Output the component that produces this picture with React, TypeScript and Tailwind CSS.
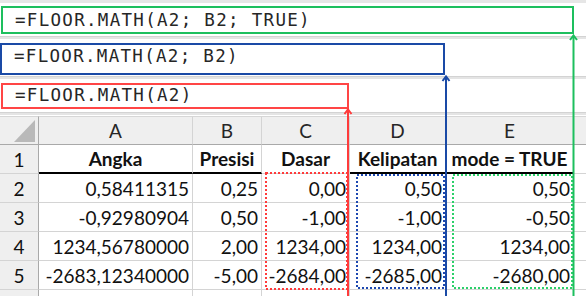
import React from 'react';

const rows = [
  ['0,58411315', '0,25', '0,00', '0,50', '0,50'],
  ['-0,92980904', '0,50', '-1,00', '-1,00', '-0,50'],
  ['1234,56780000', '2,00', '1234,00', '1234,00', '1234,00'],
  ['-2683,12340000', '-5,00', '-2684,00', '-2685,00', '-2680,00'],
];

const headers = ['Angka', 'Presisi', 'Dasar', 'Kelipatan', 'mode = TRUE'];
const letters = ['A', 'B', 'C', 'D', 'E'];

function Separator() {
  return <div className="h-[3px] bg-[#e4e4e4] border-t border-[#d3d3d3]" />;
}

function FormulaText({ children }: { children: React.ReactNode }) {
  return (
    <span className="pl-[12px] text-[17.5px] leading-none tracking-[1.3px] text-[#262626] whitespace-nowrap [font-family:'DejaVu_Sans_Mono',monospace]">
      {children}
    </span>
  );
}

function Overlay() {
  return (
    <svg className="absolute inset-0 pointer-events-none" width="586" height="296" viewBox="0 0 586 296">
      {/* dotted result ranges */}
      <rect x="266" y="173" width="81" height="116" fill="none" stroke="#ff3b3b" strokeWidth="2" strokeDasharray="2 2" />
      <rect x="357" y="175" width="87" height="113" fill="none" stroke="#1d48b0" strokeWidth="2" strokeDasharray="2 2" />
      <rect x="453" y="175" width="119" height="113" fill="none" stroke="#2bd06a" strokeWidth="2" strokeDasharray="2 2" />

      {/* arrows up to formula boxes */}
      <line x1="348" y1="110" x2="348" y2="296" stroke="#ff3b3b" strokeWidth="2" />
      <polyline points="344.5,114 348,109.5 351.5,114" fill="none" stroke="#ff3b3b" strokeWidth="2" />
      <line x1="446" y1="77" x2="446" y2="296" stroke="#1a4aa6" strokeWidth="2" />
      <polyline points="442.5,81 446,76.5 449.5,81" fill="none" stroke="#1a4aa6" strokeWidth="2" />
      <line x1="573.5" y1="36" x2="573.5" y2="296" stroke="#1dbf5e" strokeWidth="2" />
      <polyline points="570,40 573.5,35.5 577,40" fill="none" stroke="#1dbf5e" strokeWidth="2" />
    </svg>
  );
}

export default function App() {
  return (
    <div className="relative w-[586px] h-[296px] overflow-hidden bg-white [font-family:Lato,'Liberation_Sans',sans-serif]">
      {/* formula bars */}
      <div className="h-[3px] bg-[#e6e6e6]" />
      <div className="h-[33px] pt-[3px]">
        <div className="ml-[1px] w-[573px] h-[28px] border-2 border-[#1dbf5e] flex items-center pt-[1px]">
          <FormulaText>=FLOOR.MATH(A2; B2; TRUE)</FormulaText>
        </div>
      </div>
      <Separator />
      <div className="h-[37px] pt-[4px]">
        <div className="w-[445px] h-[32px] border-2 border-[#1a4aa6] flex items-center pb-[4px]">
          <FormulaText>=FLOOR.MATH(A2; B2)</FormulaText>
        </div>
      </div>
      <Separator />
      <div className="h-[33px] pt-[4px]">
        <div className="ml-[1px] w-[348px] h-[26px] border-2 border-[#ff4545] flex items-center">
          <FormulaText>=FLOOR.MATH(A2)</FormulaText>
        </div>
      </div>
      <Separator />
      <div className="h-[1px]" />

      {/* sheet */}
      <div className="grid grid-cols-[39px_154px_69px_88px_96px_128px_12px] auto-rows-[29px] text-[19px] text-[#111]">
        <div className="bg-[#efefef] border-r border-b border-[#a9a9a9] border-t border-t-[#d6d6d6] flex items-end justify-end pr-[3px] pb-[2px]">
          <svg width="21" height="22" viewBox="0 0 21 22">
            <polygon points="21,0 21,22 0,22" fill="#b9b9b9" />
          </svg>
        </div>
        {letters.map((l) => (
          <div key={l} className="bg-[#efefef] border-r border-[#d4d4d4] border-b border-b-[#a9a9a9] border-t border-t-[#d6d6d6] text-center pt-[2px] leading-[24px] text-[#262626]">
            {l}
          </div>
        ))}
        <div className="bg-[#efefef] border-b border-b-[#a9a9a9] border-t border-t-[#d6d6d6]" />

        <div className="bg-[#efefef] border-r border-[#a9a9a9] border-b border-b-[#d4d4d4] text-center pt-[2px] leading-[26px]">1</div>
        {headers.map((h, i) => (
          <div
            key={h}
            className={
              'border-r border-[#d4d4d4] text-center font-bold pt-[1px] leading-[25px] whitespace-nowrap ' +
              (i === 2 ? 'border-b' : 'border-b-2 border-b-black')
            }
          >
            {h}
          </div>
        ))}
        <div className="border-b border-[#d4d4d4]" />

        {rows.map((r, ri) => (
          <React.Fragment key={ri}>
            <div className="bg-[#efefef] border-r border-[#a9a9a9] border-b border-b-[#d4d4d4] text-center pt-[2px] leading-[26px]">
              {ri + 2}
            </div>
            {r.map((v, ci) => (
              <div key={ci} className="border-r border-b border-[#d4d4d4] text-right pr-[3px] pt-[2px] leading-[26px] whitespace-nowrap">
                {v}
              </div>
            ))}
            <div className="border-b border-[#d4d4d4]" />
          </React.Fragment>
        ))}

        <div className="bg-[#efefef] border-r border-[#a9a9a9]" />
        {letters.map((l) => (
          <div key={l} className="border-r border-[#d4d4d4]" />
        ))}
        <div />
      </div>

      <Overlay />
    </div>
  );
}
